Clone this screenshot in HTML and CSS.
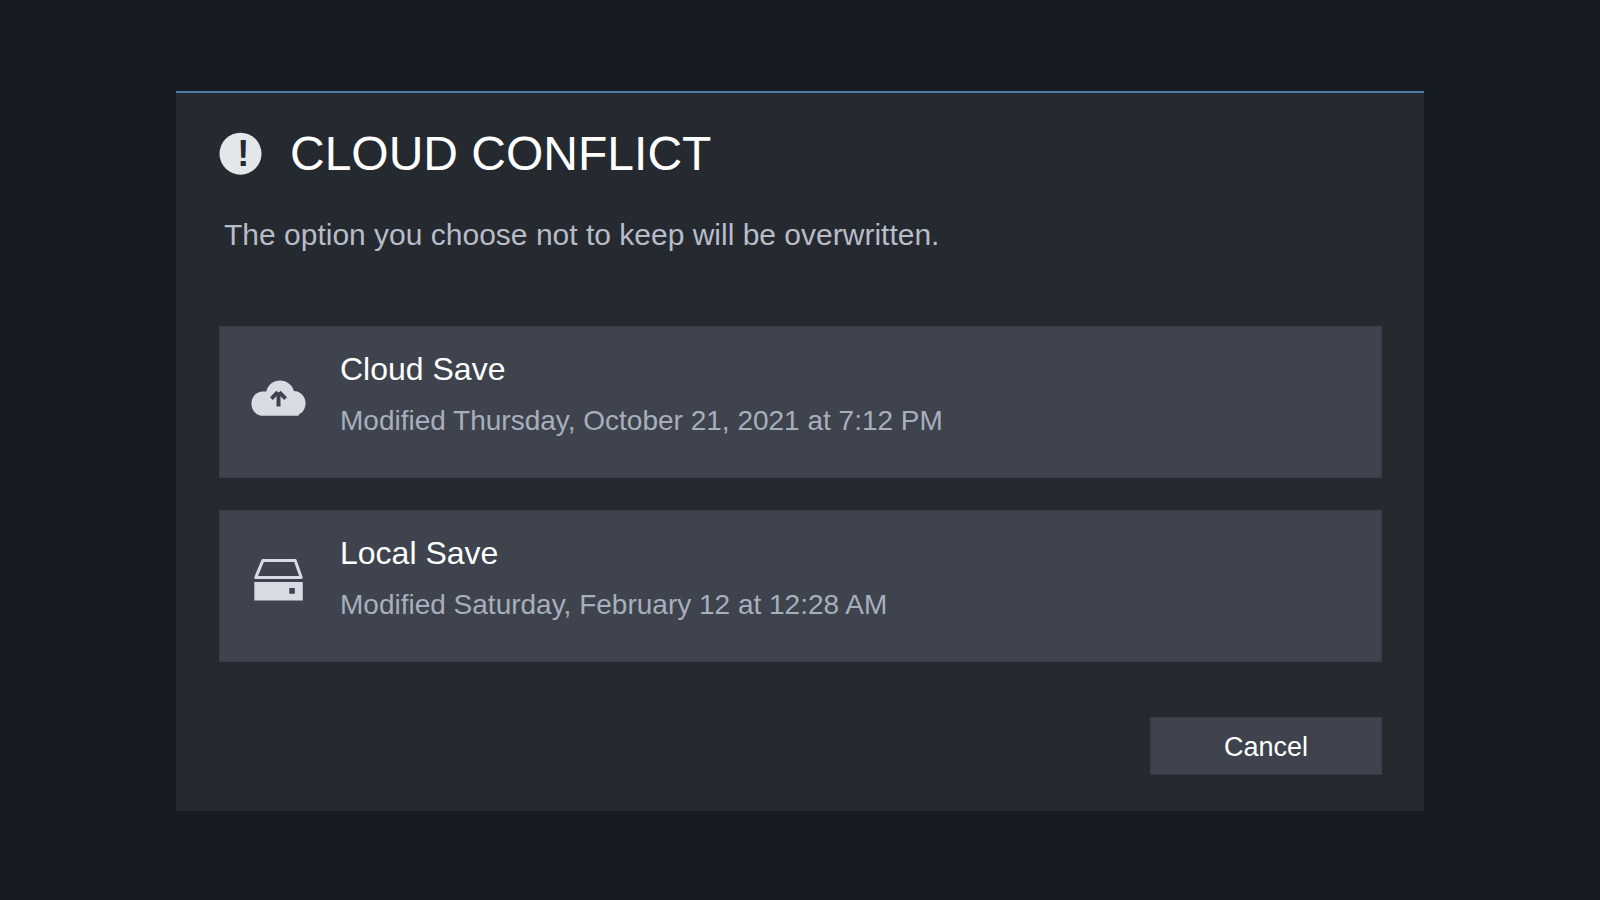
FILE: index.html
```html
<!DOCTYPE html>
<html lang="en">
<head>
    <meta charset="utf-8">
    <title>Cloud Conflict</title>
    <link rel="stylesheet" href="styles.css">
</head>

<body>
    <main class="dialog" role="dialog" aria-labelledby="title" aria-describedby="description">
        <header>
            <svg class="alert" viewBox="0 0 43 43" aria-hidden="true">
                <circle cx="21.5" cy="20.7" r="21"></circle>
                <text x="24.3" y="32.5">!</text>
            </svg>
            <h1 id="title">CLOUD CONFLICT</h1>
        </header>
        <p id="description">The option you choose not to keep will be overwritten.</p>
        <div class="options">
            <button class="option" type="button">
                <svg class="icon" viewBox="0 0 60 56" aria-hidden="true">
                    <path class="fill" d="M13 48.7C7 47.5 3.4 42.5 3.4 36.7C3.4 29.9 8.3 24.4 15 24.4H18.3C19.6 18 25.3 13.4 32 13.4C38.6 13.4 44.4 17.8 45.9 23.9C52.6 24 57.6 29.5 57.6 36.2C57.6 41 55.2 45.3 51 47.2L50.5 48.7Z"></path>
                    <path class="arrow" d="M23.4 31.6L29.8 25.2M37.6 31.6L31.2 25.2"></path>
                    <path class="arrow" d="M30.5 25.5V39.5"></path>
                </svg>
                <span class="text">
                    <span class="name">Cloud Save</span>
                    <span class="date">Modified Thursday, October 21, 2021 at 7:12 PM</span>
                </span>
            </button>
            <button class="option" type="button">
                <svg class="icon" viewBox="0 0 60 56" aria-hidden="true">
                    <path class="line" d="M14.8 9.6H47.2L53.2 26.4H7.8Z"></path>
                    <path class="fill" fill-rule="evenodd" d="M6.3 31H54.8V49.5H6.3ZM41.3 37V42.7H46.8V37Z"></path>
                </svg>
                <span class="text">
                    <span class="name">Local Save</span>
                    <span class="date">Modified Saturday, February 12 at 12:28 AM</span>
                </span>
            </button>
        </div>
        <footer>
            <button class="cancel" type="button">Cancel</button>
        </footer>
    </main>
</body>
</html>
```
FILE: styles.css
```css
* {
    box-sizing: border-box;
}
body {
    display: flex;
    align-items: center;
    justify-content: center;
    min-height: 100vh;
    margin: 0;
    padding-top: 2px;
    font-family: "Liberation Sans", Arial, sans-serif;
    color: #fff;
    background: #171b23;
}
.dialog {
    width: 78%;
    padding: 33px 42px 36px 43px;
    background: #252930;
    border-top: 2px solid #4a7aa5;
}

header {
    display: flex;
    align-items: center;
    gap: 28px;
}
h1 {
    margin: 0;
    font-size: 48px;
    font-weight: normal;
    line-height: 56px;
}
.alert {
    width: 43px;
    height: 43px;
    overflow: visible;
    fill: #e3e7ea;
}
.alert text {
    fill: #252930;
    font-size: 36px;
    font-weight: bold;
    text-anchor: middle;
}
#description {
    margin: 33px 0 71px 5px;
    font-size: 30px;
    line-height: 40px;
    color: #b8bcc8;
}

button {
    font-family: inherit;
    color: inherit;
    background: #3e434e;
    border: 1px solid #363b45;
    cursor: pointer;
}
button:hover {
    background: #4a505d;
}
.options {
    display: flex;
    flex-direction: column;
    gap: 32px;
}
.option {
    display: flex;
    align-items: center;
    gap: 32px;
    padding: 22px 28px 36px;
    text-align: left;
}
.text {
    display: flex;
    flex-direction: column;
    gap: 12px;
    line-height: 40px;
}
.name {
    font-size: 32px;
}
.date {
    font-size: 28px;
    color: #a8aebc;
}

.icon {
    flex: none;
    width: 60px;
    height: 56px;
    fill: none;
}
.icon .fill {
    fill: #d7dbe3;
}
.icon .line {
    stroke: #d7dbe3;
    stroke-width: 3px;
    stroke-linejoin: round;
}
.icon .arrow {
    stroke: #3e434e;
    stroke-width: 4px;
}

footer {
    display: flex;
    justify-content: flex-end;
    margin-top: 55px;
}
.cancel {
    width: 232px;
    height: 58px;
    padding-top: 4px;
    font-size: 27px;
}
```
